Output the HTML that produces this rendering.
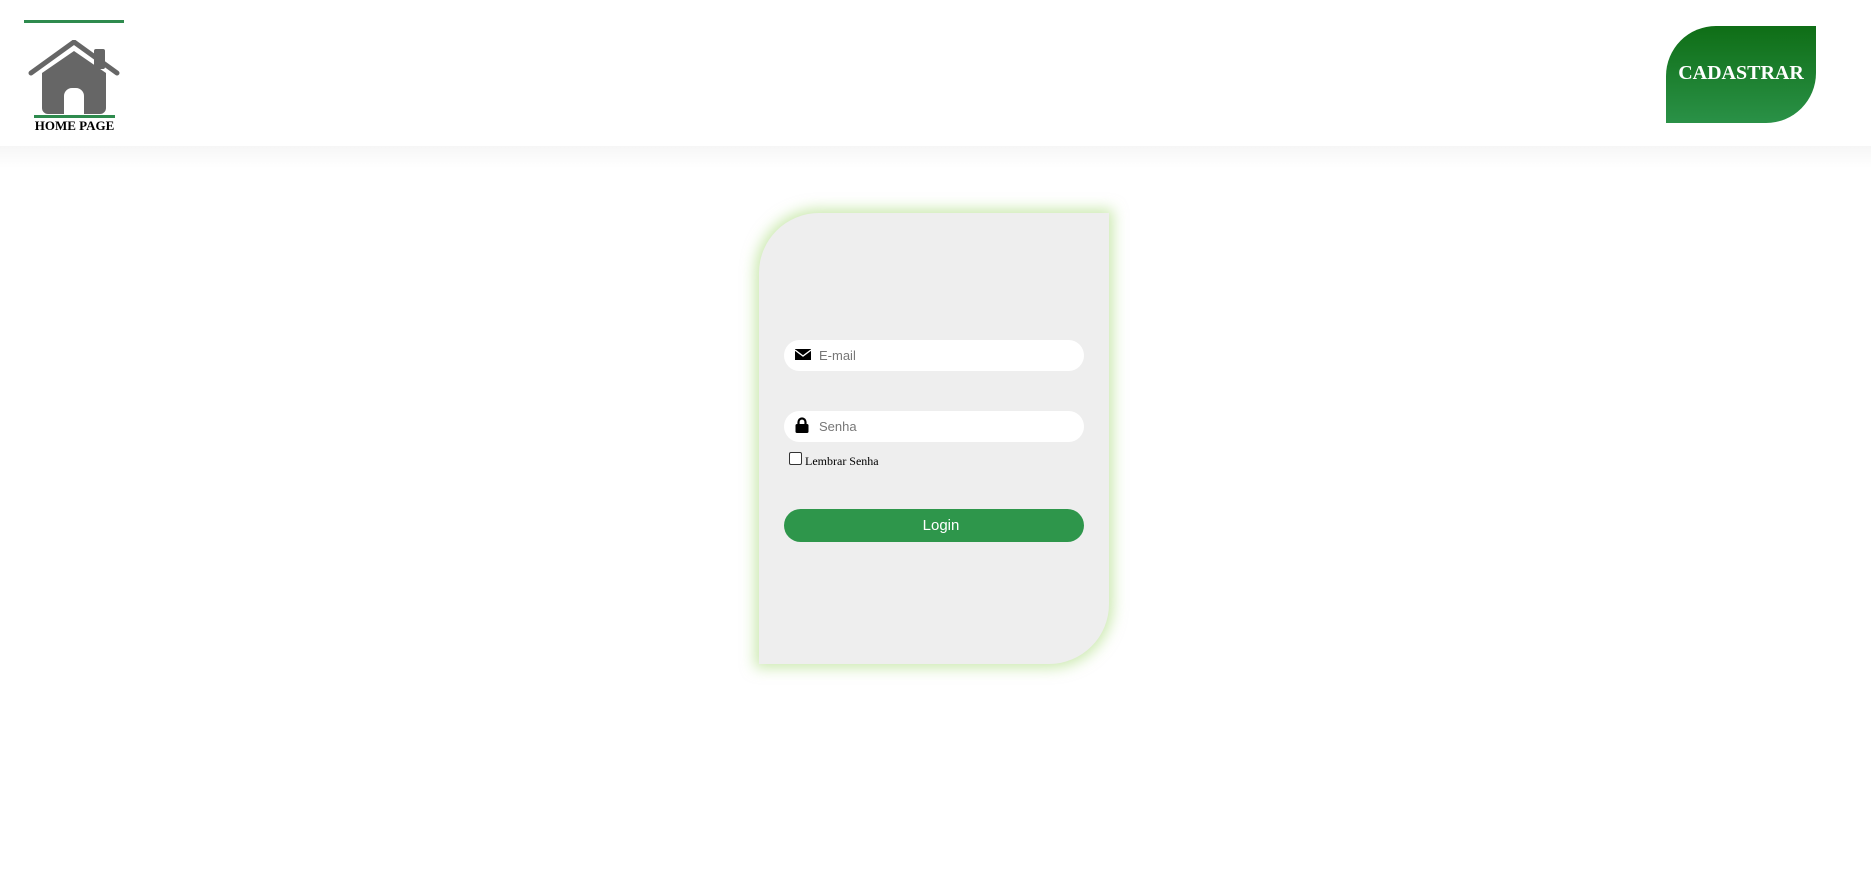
<!DOCTYPE html>
<html><head><meta charset="utf-8"><style>
html,body{margin:0;padding:0;width:1871px;height:894px;background:#fff;overflow:hidden;font-family:"Liberation Sans",sans-serif}
.band{position:absolute;left:0;top:146px;width:1871px;height:22px;background:linear-gradient(#f6f6f6,#fff)}
.topline{position:absolute;left:24px;top:20px;width:100px;height:3px;background:#2e8b4e}
.uline{position:absolute;left:34px;top:115px;width:81px;height:3px;background:#2e8b4e}
.hp{position:absolute;left:34px;top:118px;width:81px;text-align:center;font:bold 13px "Liberation Serif",serif;color:#000}
.cad{position:absolute;left:1666px;top:26px;width:150px;height:97px;border-radius:50px 0 50px 0;background:linear-gradient(#0f6e16,#2a9147);color:#fff;font:bold 20px "Liberation Serif",serif;text-align:center;line-height:94px}
.card{position:absolute;left:759px;top:213px;width:350px;height:451px;background:#eeeeee;border-radius:60px 0 60px 0;box-shadow:0 0 14px 4px rgba(160,215,110,0.55)}
.inp{position:absolute;left:25px;width:300px;height:31px;background:#fff;border-radius:16px}
.inp span{position:absolute;left:35px;top:8px;font-size:13px;color:#777}
.inp svg{position:absolute;left:11px;top:8px}
.chk{position:absolute;left:30px;top:239px;width:11px;height:11px;border:1px solid #333;border-radius:2px;background:#fff}
.lbl{position:absolute;left:46px;top:241px;font:12px "Liberation Serif",serif;color:#000}
.btn{position:absolute;left:25px;top:296px;width:300px;height:33px;background:#2e964b;border-radius:17px;color:#fff;font-size:15px;text-align:center;line-height:33px;text-indent:14px}
</style></head><body>
<div class="band"></div>
<div class="topline"></div>
<svg style="position:absolute;left:28px;top:40px" width="92" height="76" viewBox="0 0 92 76">
<rect x="66" y="9" width="11" height="20" rx="2" fill="#666"/>
<path d="M3 33 L46 2 L89 33" fill="none" stroke="#666" stroke-width="5" stroke-linecap="round" stroke-linejoin="round"/>
<path d="M14 33 L46 11 L78 33 V68 a6 6 0 0 1 -6 6 H56 V56 a8 8 0 0 0 -8 -8 h-4 a8 8 0 0 0 -8 8 V74 H20 a6 6 0 0 1 -6 -6 Z" fill="#666"/>
</svg>
<div class="uline"></div>
<div class="hp">HOME PAGE</div>
<div class="cad">CADASTRAR</div>
<div class="card">
<div class="inp" style="top:127px"><svg width="16" height="13" viewBox="0 0 16 13"><rect x="0" y="1" width="16" height="11" fill="#000"/><path d="M0 2 L8 8 L16 2" fill="none" stroke="#fff" stroke-width="1.4"/></svg><span>E-mail</span></div>
<div class="inp" style="top:198px"><svg width="14" height="16" viewBox="0 0 14 16" style="top:6px"><path d="M3.5 7 V5 a3.5 3.5 0 0 1 7 0 V7" fill="none" stroke="#000" stroke-width="2.2"/><rect x="0.5" y="7" width="13" height="9" rx="1.5" fill="#000"/></svg><span>Senha</span></div>
<div class="chk"></div>
<div class="lbl">Lembrar Senha</div>
<div class="btn">Login</div>
</div>
</body></html>
